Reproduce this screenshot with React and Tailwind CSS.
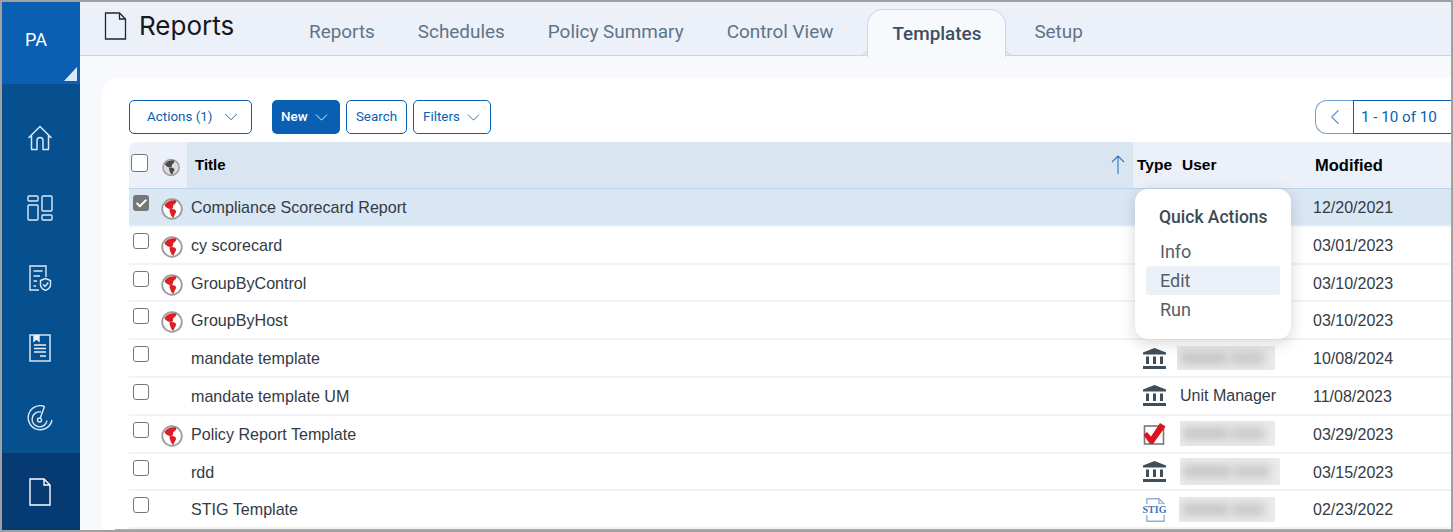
import { ChevronDown, ChevronLeft, Check } from "lucide-react";

const tabs = ["Reports", "Schedules", "Policy Summary", "Control View"];

const rows = [
  { title: "Compliance Scorecard Report", globe: true, date: "12/20/2021", checked: true },
  { title: "cy scorecard", globe: true, date: "03/01/2023" },
  { title: "GroupByControl", globe: true, date: "03/10/2023" },
  { title: "GroupByHost", globe: true, date: "03/10/2023" },
  { title: "mandate template", type: "bank", date: "10/08/2024", blur: "w-[98px] ml-[-1px] h-[24px]" },
  { title: "mandate template UM", type: "bank", user: "Unit Manager", date: "11/08/2023" },
  { title: "Policy Report Template", globe: true, type: "check", date: "03/29/2023", blur: "w-[95px] ml-[2px] h-[25px]" },
  { title: "rdd", type: "bank", date: "03/15/2023", blur: "w-[100px] ml-[2px] h-[27px]" },
  { title: "STIG Template", type: "stig", date: "02/23/2022", blur: "w-[96px] ml-[1px] h-[25px]" },
];

const HomeIcon = () => (
  <svg width="26" height="26" viewBox="0 0 26 26" fill="none" stroke="#dbe8f6" strokeWidth="1.5" strokeLinejoin="round">
    <path d="M1.5 13 13 1.5 24.500 13M4.500 10.500V24.500H10V15.500a3 3 0 0 1 6 0V24.500H21.500V10.500" />
  </svg>
);

const DashIcon = () => (
  <svg width="26" height="26" viewBox="0 0 26 26" fill="none" stroke="#dbe8f6" strokeWidth="1.4">
    <rect x="1" y="1" width="10" height="5" rx="1" />
    <rect x="1" y="10" width="10" height="15" rx="1" />
    <rect x="15" y="1" width="10" height="15" rx="1" />
    <rect x="15" y="20" width="10" height="5" rx="1" />
  </svg>
);

const PolicyIcon = () => (
  <svg width="24" height="26" viewBox="0 0 24 26" fill="none" stroke="#dbe8f6" strokeWidth="1.4">
    <path d="M11 25H2V1H18V12" />
    <path d="M5.500 6H14.500M5.500 11H12M5.500 16H9M5.500 21H8" />
    <path d="M12.500 15.500 17.500 13.500 22.500 15.500V20c0 2.500-2.200 4.200-5 5.500-2.800-1.300-5-3-5-5.500Z" />
    <path d="M15 19.500 17 21.500 20.300 17.500" />
  </svg>
);

const ReportIcon = () => (
  <svg width="22" height="28" viewBox="0 0 22 28" fill="none" stroke="#e8f0f9" strokeWidth="1.4">
    <rect x="1" y="1" width="20" height="26" />
    <path d="M5 1V7L7.500 5 10 7V1" fill="#e8f0f9" />
    <path d="M5 11H17M5 14.500H17M5 18H17M11 22H17" />
  </svg>
);

const GaugeIcon = () => (
  <svg width="26" height="26" viewBox="0 0 26 26" fill="none" stroke="#dbe8f6" strokeWidth="1.4">
    <path d="M17.500 1.500A12 12 0 1 0 25 15" />
    <path d="M14 7A7.500 7.500 0 1 0 20 15.500" />
    <circle cx="12.500" cy="15" r="2" />
    <path d="M13.300 13 17.500 1.500" />
  </svg>
);

const DocIcon = ({ stroke = "#ffffff", width = 22, height = 28, strokeWidth = 1.4 }) => (
  <svg width={width} height={height} viewBox="0 0 22 28" fill="none" stroke={stroke} strokeWidth={strokeWidth}>
    <path d="M1 1H15L21 7V27H1Z" />
    <path d="M15 1V7H21" />
  </svg>
);

const GlobeIcon = ({ gray }) => (
  <svg width="22" height="22" viewBox="0 0 22 22">
    <circle cx="11" cy="11" r="9.800" fill={gray ? "#dcdcdc" : "#fff"} stroke="#9c9c9c" strokeWidth="1.800" />
    <path
      d="M3.500 7C5.500 3 11 1.500 15 2.500c1 2.500-1.500 3.500-2.500 4.500-1 1.500.5 3.700-2.500 3.900C7 11 4.500 9.500 3.500 7Z"
      fill={gray ? "#4a4a4a" : "#dc1f26"}
    />
    <path
      d="M8.500 11.500c2.500-1 6.200-.3 6.700 2-.5 2.200-2.200 3.500-2.700 6.500-2-1-4-5.300-4-8.500Z"
      fill={gray ? "#4a4a4a" : "#dc1f26"}
    />
  </svg>
);

const BankIcon = () => (
  <svg width="23" height="21" viewBox="0 0 23 21" fill="#3d4f5c">
    <path d="M11.500 0 23 4.500V6.500H0V4.500Z" />
    <rect x="3" y="8.500" width="3" height="7.500" />
    <rect x="10" y="8.500" width="3" height="7.500" />
    <rect x="17" y="8.500" width="3" height="7.500" />
    <rect x="0" y="18" width="23" height="3" />
  </svg>
);

const CheckIcon = () => (
  <svg width="23" height="23" viewBox="0 0 23 23">
    <rect x="1.500" y="4" width="19" height="18" fill="#fff" stroke="#777" strokeWidth="1.600" />
    <path d="M.5 13 4 10 8 14.500 17 1 22.500 4.500 10 22H7Z" fill="#dc1420" />
  </svg>
);

const StigIcon = () => (
  <div className="relative w-[23px] h-[27px] flex items-center justify-center">
    <div className="absolute left-[3px] top-[1px]">
      <DocIcon stroke="#8fb0d8" width={19} height={26} strokeWidth={1.6} />
    </div>
    <span className="relative bg-white text-[10px] leading-[11px] font-bold text-[#3f74b5] font-['Liberation_Serif',serif]">STIG</span>
  </div>
);

const TypeIcon = ({ type }) => {
  if (type === "bank") return <BankIcon />;
  if (type === "check") return <CheckIcon />;
  if (type === "stig") return <StigIcon />;
  return null;
};

const NavItem = ({ children }) => (
  <div className="h-[70px] flex items-center justify-center pr-[3px]">{children}</div>
);

const Sidebar = () => (
  <aside className="w-[78px] shrink-0 flex flex-col bg-[#07508f] text-white">
    <div className="relative h-[82px] bg-[#0a5fb3] flex items-center justify-center pb-[8px] pr-[10px] font-['Roboto',sans-serif] text-[18px]">
      PA
      <svg className="absolute right-[3px] bottom-[3px]" width="13" height="14" viewBox="0 0 13 14">
        <path d="M13 0V14H0Z" fill="#dbe8f6" />
      </svg>
    </div>
    <div className="flex-1 flex flex-col pt-[19px]">
      <NavItem><HomeIcon /></NavItem>
      <NavItem><DashIcon /></NavItem>
      <NavItem><PolicyIcon /></NavItem>
      <NavItem><ReportIcon /></NavItem>
      <NavItem><GaugeIcon /></NavItem>
    </div>
    <div className="h-[77px] bg-[#063a72] flex items-center justify-center pr-[3px]">
      <DocIcon />
    </div>
  </aside>
);

const Header = () => (
  <header className="h-[54px] shrink-0 flex bg-[#ecf1f9] border-b border-[#c5d6e8] font-['Roboto',sans-serif]">
    <div className="w-[207px] shrink-0 flex items-start pl-[24px] pt-[10px] gap-[12px]">
      <DocIcon stroke="#20262d" width={23} height={28} strokeWidth={1.300} />
      <span className="text-[26px] leading-[30px] text-[#15191e] font-['Inter',sans-serif] mt-[-1px]">Reports</span>
    </div>
    <nav className="flex items-start text-[18.900px] text-[#5f7488]">
      {tabs.map((tab) => (
        <span key={tab} className="mt-[19px] leading-[22px] mr-[43px] first:ml-[22px]">{tab}</span>
      ))}
      <span className="relative top-[1px] h-[48px] mt-[6px] ml-[-9px] px-[24px] pt-[13px] bg-[#f7f9fc] border border-b-0 border-[#c5d9ee] rounded-t-[16px] font-medium text-[#3d4f5f] leading-[22px]">
        Templates
        <span className="absolute left-[-8px] bottom-[1px] w-[8px] h-[8px] bg-[#ecf1f9] border-r border-b border-[#c5d9ee] rounded-br-[8px]" />
        <span className="absolute right-[-8px] bottom-[1px] w-[8px] h-[8px] bg-[#ecf1f9] border-l border-b border-[#c5d9ee] rounded-bl-[8px]" />
      </span>
      <span className="mt-[19px] ml-[28px] leading-[22px]">Setup</span>
    </nav>
  </header>
);

const Toolbar = () => (
  <div className="h-[34px] flex items-center pl-[27px] pr-0 text-[13.400px] font-['Roboto',sans-serif] text-[#0a5fb3]">
    <button className="w-[123px] h-[34px] flex items-center justify-between pl-[17px] pr-[9px] border border-[#0a5fb3] rounded-[5px]">
      <span>Actions (1)</span>
      <ChevronDown size={22} strokeWidth={1} />
    </button>
    <button className="ml-[20px] w-[68px] h-[34px] flex items-center justify-between pl-[9px] pr-[8px] bg-[#0a5fb3] text-white font-medium rounded-[5px]">
      <span>New</span>
      <ChevronDown size={21} strokeWidth={1} />
    </button>
    <button className="ml-[6px] w-[61px] h-[34px] border border-[#0a5fb3] rounded-[5px]">Search</button>
    <button className="ml-[6px] w-[78px] h-[34px] flex items-center justify-between pl-[9px] pr-[6px] border border-[#0a5fb3] rounded-[5px]">
      <span>Filters</span>
      <ChevronDown size={21} strokeWidth={1} />
    </button>
    <div className="ml-auto flex h-[34px]">
      <div className="w-[38px] flex items-center justify-center border border-r-0 border-[#6f9fd0] rounded-l-[12px] text-[#5f94cc]">
        <ChevronLeft size={26} strokeWidth={1} />
      </div>
      <div className="w-[98px] pl-[7px] flex items-center border border-r-0 border-[#0a5fb3] text-[15.200px]">1 - 10 of 10</div>
    </div>
  </div>
);

const Box = ({ checked, head }) => {
  if (checked) {
    return (
      <div className="w-[16px] h-[16px] rounded-[3px] bg-[#767676] flex items-center justify-center">
        <Check size={13} strokeWidth={3.500} className="text-white" />
      </div>
    );
  }
  return <div className={`${head ? "w-[17px] h-[18px]" : "w-[16px] h-[16px]"} rounded-[3px] bg-white border-[1.500px] border-[#767676]`} />;
};

const Blurred = ({ size }) => (
  <div className={`${size} bg-[#ebebeb] overflow-hidden flex items-center gap-[2px] px-[3px]`}>
    <div className="w-[52%] h-[13px] bg-[#c6c6c6] blur-[5px]" />
    <div className="w-[38%] h-[13px] bg-[#c9c9c9] blur-[5px]" />
  </div>
);

const cols = "grid grid-cols-[58px_946px_45px_135px_1fr]";

const Row = ({ row }) => (
  <div className={`${cols} h-[37.800px] border-b-2 border-[#f1f3f6] ${row.checked ? "bg-[#d9e6f3]" : ""}`}>
    <div className="flex">
      <div className="w-[30px] pl-[4px] pt-[6px]"><Box checked={row.checked} /></div>
      <div className="pt-[9px] ml-[2px]">{row.globe && <GlobeIcon />}</div>
    </div>
    <div className="pl-[4px] pt-[8px] leading-[20px] text-[16.100px] text-[#333b45]">{row.title}</div>
    <div className="flex items-center pl-[10px]"><TypeIcon type={row.type} /></div>
    <div className="flex items-center">
      {row.user && <span className="ml-[2px] text-[#333b45]">{row.user}</span>}
      {row.blur && <Blurred size={row.blur} />}
    </div>
    <div className="pt-[9px] leading-[20px] text-[#333b45]">{row.date}</div>
  </div>
);

const QuickActions = () => (
  <div className="absolute left-[1033px] top-[111px] w-[156px] h-[150px] px-[11px] pt-[17px] bg-white rounded-[13px] shadow-[0_4px_16px_rgba(0,0,0,0.16)] font-['Roboto',sans-serif] text-[18px] text-[#555e67]">
    <div className="pl-[13px] h-[22px] leading-[22px] text-[#3d4a55] text-[17.500px] font-medium">Quick Actions</div>
    <div className="mt-[9px] pl-[14px] h-[29px] leading-[29px]">Info</div>
    <div className="pl-[14px] h-[29px] leading-[29px] bg-[#ecf1f9] rounded-[3px]">Edit</div>
    <div className="pl-[14px] h-[29px] leading-[29px]">Run</div>
  </div>
);

const Table = () => (
  <div className="mt-[8px] ml-[27px] font-['Liberation_Sans',sans-serif] text-[16px]">
    <div className={`${cols} h-[47px] bg-[#ecf1f9] border-b border-[#bcd3ea] text-black font-bold rounded-tl-[8px]`}>
      <div className="flex">
        <div className="w-[30px] pl-[2px] pt-[12px]"><Box head /></div>
        <div className="pt-[20px] ml-[3px] scale-[0.82] origin-top-left"><GlobeIcon gray /></div>
      </div>
      <div className="flex items-center justify-between pl-[8px] pr-[8px] bg-[#d9e6f1] text-[15px]">
        <span>Title</span>
        <svg width="14" height="20" viewBox="0 0 14 20" fill="none" stroke="#2f76c0" strokeWidth="1.100">
          <path d="M7 1V19M1 7 7 1 13 7" />
        </svg>
      </div>
      <div className="flex items-center pl-[4px] text-[15.500px]">Type</div>
      <div className="flex items-center pl-[4px] text-[15.500px]">User</div>
      <div className="flex items-center pl-[2px] text-[16.500px]">Modified</div>
    </div>
    {rows.map((row) => (
      <Row key={row.title} row={row} />
    ))}
    <div className="h-[2px] ml-[-14px] bg-[#b4b0a8]" />
  </div>
);

export default function App() {
  return (
    <div className="w-[1453px] h-[532px] overflow-hidden border-2 border-[#a0a0a0] flex bg-[#f7f9fc]">
      <Sidebar />
      <main className="flex-1 min-w-0 flex flex-col">
        <Header />
        <div className="relative flex-1 mt-[22px] ml-[22px] pt-[22px] bg-white rounded-tl-[16px] overflow-hidden">
          <Toolbar />
          <Table />
          <QuickActions />
        </div>
      </main>
    </div>
  );
}
